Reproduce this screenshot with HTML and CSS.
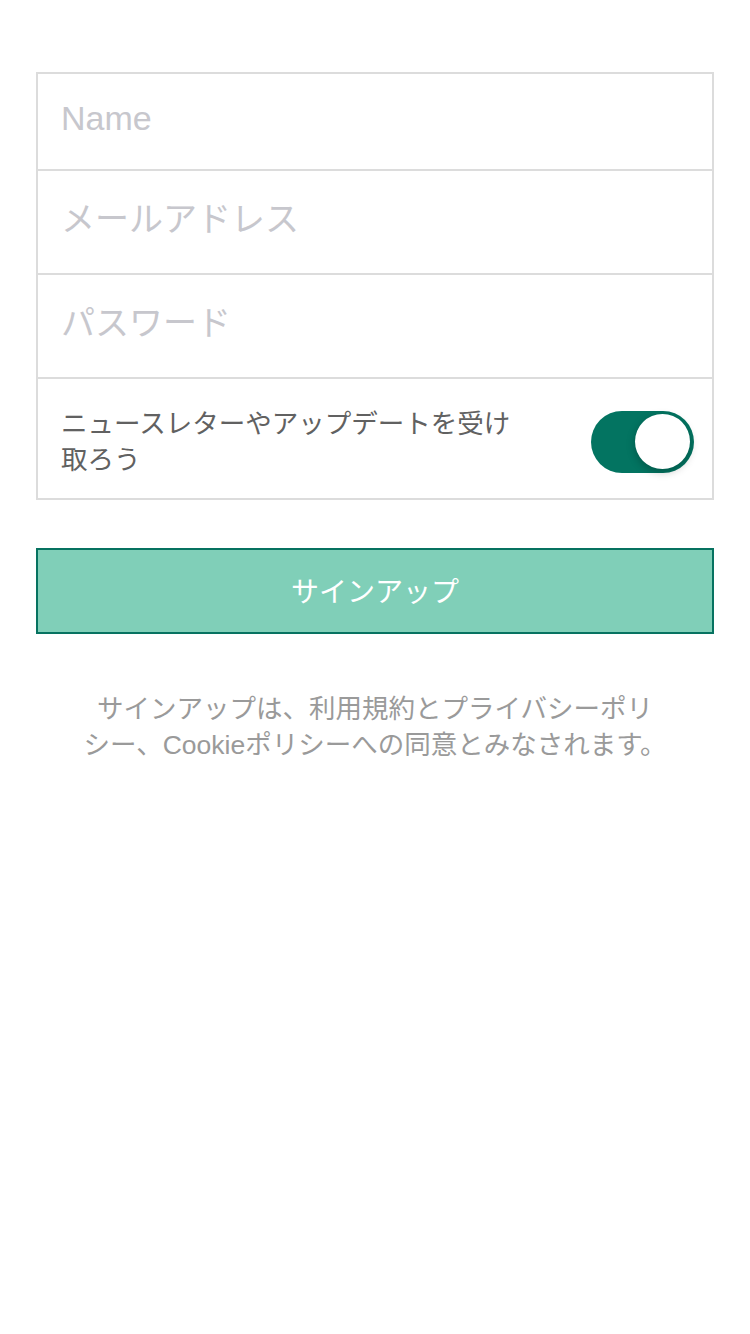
FILE: index.html
```html
<!DOCTYPE html>
<html lang="ja">
<head>
<meta charset="utf-8">
<link rel="stylesheet" href="styles.css">
</head>
<body>
<div class="page">
  <div class="form">
    <div class="row row-first"><span class="ph">Name</span></div>
    <div class="row"><span class="ph">メールアドレス</span></div>
    <div class="row"><span class="ph">パスワード</span></div>
    <div class="row row-toggle">
      <span class="label">ニュースレターやアップデートを受け取ろう</span>
      <span class="switch"><span class="knob"></span></span>
    </div>
  </div>
  <div class="button">サインアップ</div>
  <p class="note">サインアップは、利用規約とプライバシーポリシー、Cookieポリシーへの同意とみなされます。</p>
</div>
</body>
</html>
```
FILE: styles.css
```css
html, body {
  margin: 0;
  padding: 0;
  background: #ffffff;
}
body {
  font-family: "Liberation Sans", "Noto Sans CJK JP", sans-serif;
}
.page {
  padding: 72px 36px 0;
}
.form {
  border: 2px solid #dcdcdc;
  display: flex;
  flex-direction: column;
}
.row {
  height: 104px;
  display: flex;
  align-items: center;
  padding: 0 20px 6px 23px;
  box-sizing: border-box;
  border-top: 2px solid #dcdcdc;
}
.row-first {
  border-top: none;
  height: 95px;
  padding-bottom: 8px;
}
.ph {
  font-size: 34px;
  line-height: 40px;
  color: #c7c7cd;
}
.row-toggle {
  height: 121px;
  justify-content: space-between;
  padding: 6px 18px 0 23px;
}
.label {
  width: 460px;
  font-size: 26.5px;
  line-height: 36px;
  color: #616161;
}
.switch {
  width: 103px;
  height: 62px;
  border-radius: 31px;
  background: #037461;
  display: flex;
  align-items: center;
  justify-content: flex-end;
  padding: 0 4px;
  box-sizing: border-box;
}
.knob {
  width: 55px;
  height: 55px;
  border-radius: 50%;
  background: #ffffff;
  box-shadow: 0 3px 8px rgba(0, 0, 0, 0.25);
}
.button {
  margin-top: 48px;
  height: 86px;
  box-sizing: border-box;
  border: 2px solid #067260;
  background: #80cfb8;
  color: #ffffff;
  font-size: 28px;
  display: flex;
  align-items: center;
  justify-content: center;
  padding-bottom: 2px;
}
.note {
  margin: 57px 41px 0;
  text-align: center;
  font-size: 26.5px;
  line-height: 36px;
  color: #9a9a9a;
  line-break: strict;
}
```
